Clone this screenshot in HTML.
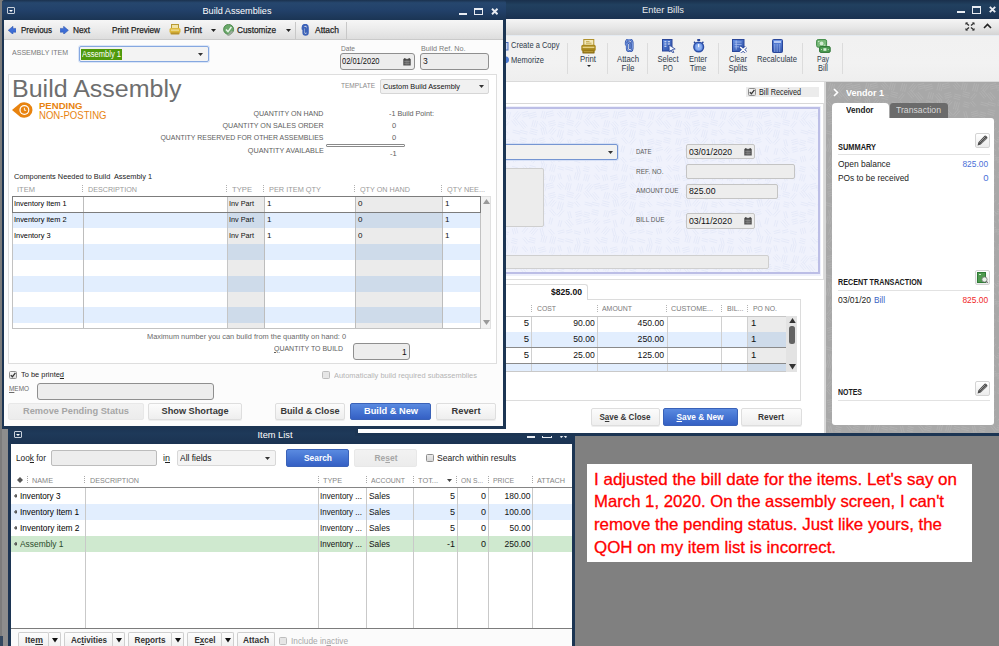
<!DOCTYPE html>
<html><head><meta charset="utf-8"><title>QuickBooks</title>
<style>
html,body{margin:0;padding:0}
html{width:999px;height:646px;overflow:hidden}
body{width:999px;height:646px;overflow:hidden;position:relative;background:#808080;font-family:"Liberation Sans",sans-serif}
body>div,body>svg,body>span{position:absolute;box-sizing:border-box}
.t{position:absolute;display:block}
u{text-decoration:underline;text-underline-offset:1px}
</style></head>
<body>
<div style="left:0px;top:429px;width:8px;height:217px;background:#8d8d8d;"></div>
<div style="left:0px;top:0px;width:1.6px;height:646px;background:#7c7c7c;"></div>
<div style="left:8px;top:428px;width:567px;height:218px;background:#1c3553;"></div>
<div style="left:8px;top:428px;width:567px;height:16px;background:linear-gradient(#1c3554 0%,#1e3959 35%,#1b3352 100%);"></div>
<div style="left:11px;top:444px;width:561px;height:202px;background:#fff;"></div>
<span class="t" style="top:430.26px;font-size:9.5px;line-height:9.5px;color:#fff;white-space:pre;left:275px;transform-origin:0 0;transform:translateX(-50%) scaleX(0.9748);transform-origin:50% 0;">Item List</span>
<div style="left:14px;top:431px;width:8px;height:7px;border:1px solid #c8d0da;border-radius:1px;"></div>
<svg style="left:16px;top:433.5px" width="4" height="2" viewBox="0 0 4 2"><path d="M0 0H4L2 2Z" fill="#fff"/></svg>
<div style="left:527px;top:436px;width:8.3px;height:2.3px;background:#e8ecf2;"></div>
<div style="left:542px;top:431px;width:10px;height:7.3px;border:1.2px solid #e8ecf2;border-top-width:2px;"></div>
<svg style="left:559.6px;top:431.2px" width="7" height="7" viewBox="0 0 7 7"><path d="M0.6 0.6L6.4 6.4M6.4 0.6L0.6 6.4" stroke="#e8ecf2" stroke-width="1.9"/></svg>
<span class="t" style="top:453.83px;font-size:9px;line-height:9px;color:#222;white-space:pre;left:16px;transform-origin:0 0;transform:scaleX(0.9217);">Loo<u>k</u> for</span>
<div style="left:51px;top:450px;width:106px;height:15.6px;background:#ededed;border:1px solid #bcbcbc;border-radius:2px;"></div>
<span class="t" style="top:453.83px;font-size:9px;line-height:9px;color:#222;white-space:pre;left:163px;transform-origin:0 0;transform:scaleX(0.9978);">i<u>n</u></span>
<div style="left:177px;top:450px;width:99px;height:16px;background:#f4f4f4;border:1px solid #d8d8d8;border-radius:2px;"></div>
<span class="t" style="top:453.63px;font-size:9px;line-height:9px;color:#111;white-space:pre;left:179.5px;transform-origin:0 0;transform:scaleX(0.9399);">All fields</span>
<svg style="left:265px;top:456.5px" width="5" height="3" viewBox="0 0 5 3"><path d="M0 0H5L2.5 3Z" fill="#333"/></svg>
<div style="left:286px;top:449px;width:63px;height:18px;background:linear-gradient(#5a8ae0 0%,#4574d2 50%,#3560c4 100%);border:1px solid #3a62b8;border-radius:2px;"></div>
<span class="t" style="top:453.36px;font-size:9.5px;line-height:9.5px;color:#fff;white-space:pre;font-weight:bold;left:317.5px;transform-origin:0 0;transform:translateX(-50%) scaleX(0.8836);transform-origin:50% 0;">Search</span>
<div style="left:354px;top:449px;width:63px;height:18px;background:linear-gradient(#f2f2f2,#ececec);border:1px solid #e8e8e8;border-radius:2px;"></div>
<span class="t" style="top:453.36px;font-size:9.5px;line-height:9.5px;color:#a6a6a6;white-space:pre;font-weight:bold;left:385.5px;transform-origin:0 0;transform:translateX(-50%) scaleX(0.8878);transform-origin:50% 0;">Re<u>s</u>et</span>
<div style="left:425.8px;top:453.8px;width:8px;height:8px;background:linear-gradient(#ebebeb,#d6d6d6);border:1px solid #8e8e8e;border-radius:1.5px;"></div>
<span class="t" style="top:453.63px;font-size:9px;line-height:9px;color:#222;white-space:pre;left:437px;transform-origin:0 0;transform:scaleX(0.9513);">Search within results</span>
<svg style="left:17px;top:476.5px" width="6" height="6" viewBox="0 0 6 6"><path d="M3 0L6 3L3 6L0 3Z" fill="#555"/></svg>
<div style="left:27px;top:476px;width:1px;height:1px;background:#a8a8a8;"></div>
<div style="left:27px;top:478px;width:1px;height:1px;background:#a8a8a8;"></div>
<div style="left:27px;top:480px;width:1px;height:1px;background:#a8a8a8;"></div>
<div style="left:27px;top:482px;width:1px;height:1px;background:#a8a8a8;"></div>
<div style="left:84px;top:476px;width:1px;height:1px;background:#a8a8a8;"></div>
<div style="left:84px;top:478px;width:1px;height:1px;background:#a8a8a8;"></div>
<div style="left:84px;top:480px;width:1px;height:1px;background:#a8a8a8;"></div>
<div style="left:84px;top:482px;width:1px;height:1px;background:#a8a8a8;"></div>
<div style="left:318px;top:476px;width:1px;height:1px;background:#a8a8a8;"></div>
<div style="left:318px;top:478px;width:1px;height:1px;background:#a8a8a8;"></div>
<div style="left:318px;top:480px;width:1px;height:1px;background:#a8a8a8;"></div>
<div style="left:318px;top:482px;width:1px;height:1px;background:#a8a8a8;"></div>
<div style="left:366px;top:476px;width:1px;height:1px;background:#a8a8a8;"></div>
<div style="left:366px;top:478px;width:1px;height:1px;background:#a8a8a8;"></div>
<div style="left:366px;top:480px;width:1px;height:1px;background:#a8a8a8;"></div>
<div style="left:366px;top:482px;width:1px;height:1px;background:#a8a8a8;"></div>
<div style="left:413px;top:476px;width:1px;height:1px;background:#a8a8a8;"></div>
<div style="left:413px;top:478px;width:1px;height:1px;background:#a8a8a8;"></div>
<div style="left:413px;top:480px;width:1px;height:1px;background:#a8a8a8;"></div>
<div style="left:413px;top:482px;width:1px;height:1px;background:#a8a8a8;"></div>
<div style="left:456px;top:476px;width:1px;height:1px;background:#a8a8a8;"></div>
<div style="left:456px;top:478px;width:1px;height:1px;background:#a8a8a8;"></div>
<div style="left:456px;top:480px;width:1px;height:1px;background:#a8a8a8;"></div>
<div style="left:456px;top:482px;width:1px;height:1px;background:#a8a8a8;"></div>
<div style="left:488px;top:476px;width:1px;height:1px;background:#a8a8a8;"></div>
<div style="left:488px;top:478px;width:1px;height:1px;background:#a8a8a8;"></div>
<div style="left:488px;top:480px;width:1px;height:1px;background:#a8a8a8;"></div>
<div style="left:488px;top:482px;width:1px;height:1px;background:#a8a8a8;"></div>
<div style="left:532px;top:476px;width:1px;height:1px;background:#a8a8a8;"></div>
<div style="left:532px;top:478px;width:1px;height:1px;background:#a8a8a8;"></div>
<div style="left:532px;top:480px;width:1px;height:1px;background:#a8a8a8;"></div>
<div style="left:532px;top:482px;width:1px;height:1px;background:#a8a8a8;"></div>
<span class="t" style="top:476.52px;font-size:7.5px;line-height:7.5px;color:#858585;white-space:pre;left:32px;transform-origin:0 0;transform:scaleX(0.9690);">NAME</span>
<span class="t" style="top:476.52px;font-size:7.5px;line-height:7.5px;color:#858585;white-space:pre;left:90px;transform-origin:0 0;transform:scaleX(0.9558);">DESCRIPTION</span>
<span class="t" style="top:476.52px;font-size:7.5px;line-height:7.5px;color:#858585;white-space:pre;left:323px;transform-origin:0 0;transform:scaleX(0.9697);">TYPE</span>
<span class="t" style="top:476.52px;font-size:7.5px;line-height:7.5px;color:#858585;white-space:pre;left:371px;transform-origin:0 0;transform:scaleX(0.9166);">ACCOUNT</span>
<span class="t" style="top:476.52px;font-size:7.5px;line-height:7.5px;color:#858585;white-space:pre;left:418px;transform-origin:0 0;transform:scaleX(0.9861);">TOT...</span>
<span class="t" style="top:476.52px;font-size:7.5px;line-height:7.5px;color:#858585;white-space:pre;left:461px;transform-origin:0 0;transform:scaleX(0.8945);">ON S...</span>
<span class="t" style="top:476.52px;font-size:7.5px;line-height:7.5px;color:#858585;white-space:pre;left:493px;transform-origin:0 0;transform:scaleX(0.9162);">PRICE</span>
<span class="t" style="top:476.52px;font-size:7.5px;line-height:7.5px;color:#858585;white-space:pre;left:537px;transform-origin:0 0;transform:scaleX(0.9692);">ATTACH</span>
<svg style="left:447px;top:478.5px" width="5" height="3" viewBox="0 0 5 3"><path d="M0 0H5L2.5 3Z" fill="#444"/></svg>
<div style="left:11px;top:487px;width:561px;height:1px;background:#858585;"></div>
<div style="left:11px;top:504px;width:561px;height:16px;background:#e2eefe;"></div>
<div style="left:11px;top:536px;width:561px;height:16px;background:#cfe9cf;"></div>
<div style="left:85px;top:488px;width:1px;height:140px;background:#c9c9c9;"></div>
<div style="left:318px;top:488px;width:1px;height:140px;background:#c9c9c9;"></div>
<div style="left:366px;top:488px;width:1px;height:140px;background:#c9c9c9;"></div>
<div style="left:413px;top:488px;width:1px;height:140px;background:#c9c9c9;"></div>
<div style="left:457px;top:488px;width:1px;height:140px;background:#c9c9c9;"></div>
<div style="left:488px;top:488px;width:1px;height:140px;background:#c9c9c9;"></div>
<div style="left:532px;top:488px;width:1px;height:140px;background:#c9c9c9;"></div>
<svg style="left:13.6px;top:494.2px" width="3.8" height="3.8" viewBox="0 0 3.8 3.8"><path d="M1.9 0L3.8 1.9L1.9 3.8L0 1.9Z" fill="#333"/><circle cx="1.9" cy="1.9" r="0.6" fill="#bbb"/></svg>
<span class="t" style="top:492.03px;font-size:9px;line-height:9px;color:#000;white-space:pre;left:20px;transform-origin:0 0;transform:scaleX(0.9095);">Inventory 3</span>
<span class="t" style="top:492.03px;font-size:9px;line-height:9px;color:#111;white-space:pre;left:320px;transform-origin:0 0;transform:scaleX(0.8930);">Inventory ...</span>
<span class="t" style="top:492.03px;font-size:9px;line-height:9px;color:#111;white-space:pre;left:369px;transform-origin:0 0;transform:scaleX(0.9327);">Sales</span>
<span class="t" style="top:492.03px;font-size:9px;line-height:9px;color:#111;white-space:pre;right:544px;transform-origin:100% 0;">5</span>
<span class="t" style="top:492.03px;font-size:9px;line-height:9px;color:#111;white-space:pre;right:513px;transform-origin:100% 0;">0</span>
<span class="t" style="top:492.03px;font-size:9px;line-height:9px;color:#111;white-space:pre;right:468.5px;transform-origin:100% 0;transform:scaleX(0.9444);">180.00</span>
<svg style="left:13.6px;top:510.2px" width="3.8" height="3.8" viewBox="0 0 3.8 3.8"><path d="M1.9 0L3.8 1.9L1.9 3.8L0 1.9Z" fill="#333"/><circle cx="1.9" cy="1.9" r="0.6" fill="#bbb"/></svg>
<span class="t" style="top:508.03px;font-size:9px;line-height:9px;color:#000;white-space:pre;left:20px;transform-origin:0 0;transform:scaleX(0.9143);">Inventory Item 1</span>
<span class="t" style="top:508.03px;font-size:9px;line-height:9px;color:#111;white-space:pre;left:320px;transform-origin:0 0;transform:scaleX(0.8930);">Inventory ...</span>
<span class="t" style="top:508.03px;font-size:9px;line-height:9px;color:#111;white-space:pre;left:369px;transform-origin:0 0;transform:scaleX(0.9327);">Sales</span>
<span class="t" style="top:508.03px;font-size:9px;line-height:9px;color:#111;white-space:pre;right:544px;transform-origin:100% 0;">5</span>
<span class="t" style="top:508.03px;font-size:9px;line-height:9px;color:#111;white-space:pre;right:513px;transform-origin:100% 0;">0</span>
<span class="t" style="top:508.03px;font-size:9px;line-height:9px;color:#111;white-space:pre;right:468.5px;transform-origin:100% 0;transform:scaleX(0.9444);">100.00</span>
<svg style="left:13.6px;top:526.2px" width="3.8" height="3.8" viewBox="0 0 3.8 3.8"><path d="M1.9 0L3.8 1.9L1.9 3.8L0 1.9Z" fill="#333"/><circle cx="1.9" cy="1.9" r="0.6" fill="#bbb"/></svg>
<span class="t" style="top:524.03px;font-size:9px;line-height:9px;color:#000;white-space:pre;left:20px;transform-origin:0 0;transform:scaleX(0.9292);">Inventory item 2</span>
<span class="t" style="top:524.03px;font-size:9px;line-height:9px;color:#111;white-space:pre;left:320px;transform-origin:0 0;transform:scaleX(0.8930);">Inventory ...</span>
<span class="t" style="top:524.03px;font-size:9px;line-height:9px;color:#111;white-space:pre;left:369px;transform-origin:0 0;transform:scaleX(0.9327);">Sales</span>
<span class="t" style="top:524.03px;font-size:9px;line-height:9px;color:#111;white-space:pre;right:544px;transform-origin:100% 0;">5</span>
<span class="t" style="top:524.03px;font-size:9px;line-height:9px;color:#111;white-space:pre;right:513px;transform-origin:100% 0;">0</span>
<span class="t" style="top:524.03px;font-size:9px;line-height:9px;color:#111;white-space:pre;right:468.5px;transform-origin:100% 0;transform:scaleX(0.9320);">50.00</span>
<svg style="left:13.6px;top:542.2px" width="3.8" height="3.8" viewBox="0 0 3.8 3.8"><path d="M1.9 0L3.8 1.9L1.9 3.8L0 1.9Z" fill="#333"/><circle cx="1.9" cy="1.9" r="0.6" fill="#bbb"/></svg>
<span class="t" style="top:540.03px;font-size:9px;line-height:9px;color:#2b4b2b;white-space:pre;left:20px;transform-origin:0 0;transform:scaleX(0.9349);">Assembly 1</span>
<span class="t" style="top:540.03px;font-size:9px;line-height:9px;color:#111;white-space:pre;left:320px;transform-origin:0 0;transform:scaleX(0.8930);">Inventory ...</span>
<span class="t" style="top:540.03px;font-size:9px;line-height:9px;color:#111;white-space:pre;left:369px;transform-origin:0 0;transform:scaleX(0.9327);">Sales</span>
<span class="t" style="top:540.03px;font-size:9px;line-height:9px;color:#111;white-space:pre;right:544px;transform-origin:100% 0;">-1</span>
<span class="t" style="top:540.03px;font-size:9px;line-height:9px;color:#111;white-space:pre;right:513px;transform-origin:100% 0;">0</span>
<span class="t" style="top:540.03px;font-size:9px;line-height:9px;color:#111;white-space:pre;right:468.5px;transform-origin:100% 0;transform:scaleX(0.9444);">250.00</span>
<div style="left:11px;top:627.6px;width:561px;height:1.2px;background:#7c7c7c;"></div>
<div style="left:11px;top:629px;width:561px;height:17px;background:#fbfbfb;"></div>
<div style="left:18px;top:632px;width:31px;height:14px;background:linear-gradient(#fdfdfd,#f0f0f0);border:1px solid #cfcfcf;border-bottom:none;border-radius:2px 2px 0 0;"></div>
<span class="t" style="top:636.03px;font-size:9px;line-height:9px;color:#333;white-space:pre;font-weight:bold;left:33.5px;transform-origin:0 0;transform:translateX(-50%) scaleX(0.9713);transform-origin:50% 0;">Ite<u>m</u></span>
<div style="left:49px;top:632px;width:12px;height:14px;background:linear-gradient(#fdfdfd,#f0f0f0);border:1px solid #cfcfcf;border-left:none;border-bottom:none;border-radius:0 2px 0 0;"></div>
<svg style="left:51.6px;top:638.2px" width="6" height="4.6" viewBox="0 0 6 4.6"><path d="M0 0H6L3 4.6Z" fill="#111"/></svg>
<div style="left:64px;top:632px;width:49px;height:14px;background:linear-gradient(#fdfdfd,#f0f0f0);border:1px solid #cfcfcf;border-bottom:none;border-radius:2px 2px 0 0;"></div>
<span class="t" style="top:636.03px;font-size:9px;line-height:9px;color:#333;white-space:pre;font-weight:bold;left:88.5px;transform-origin:0 0;transform:translateX(-50%) scaleX(0.8993);transform-origin:50% 0;">Ac<u>t</u>ivities</span>
<div style="left:113px;top:632px;width:12px;height:14px;background:linear-gradient(#fdfdfd,#f0f0f0);border:1px solid #cfcfcf;border-left:none;border-bottom:none;border-radius:0 2px 0 0;"></div>
<svg style="left:115.6px;top:638.2px" width="6" height="4.6" viewBox="0 0 6 4.6"><path d="M0 0H6L3 4.6Z" fill="#111"/></svg>
<div style="left:128px;top:632px;width:44px;height:14px;background:linear-gradient(#fdfdfd,#f0f0f0);border:1px solid #cfcfcf;border-bottom:none;border-radius:2px 2px 0 0;"></div>
<span class="t" style="top:636.03px;font-size:9px;line-height:9px;color:#333;white-space:pre;font-weight:bold;left:150.0px;transform-origin:0 0;transform:translateX(-50%) scaleX(0.9109);transform-origin:50% 0;">Re<u>p</u>orts</span>
<div style="left:172px;top:632px;width:12px;height:14px;background:linear-gradient(#fdfdfd,#f0f0f0);border:1px solid #cfcfcf;border-left:none;border-bottom:none;border-radius:0 2px 0 0;"></div>
<svg style="left:174.6px;top:638.2px" width="6" height="4.6" viewBox="0 0 6 4.6"><path d="M0 0H6L3 4.6Z" fill="#111"/></svg>
<div style="left:187px;top:632px;width:35px;height:14px;background:linear-gradient(#fdfdfd,#f0f0f0);border:1px solid #cfcfcf;border-bottom:none;border-radius:2px 2px 0 0;"></div>
<span class="t" style="top:636.03px;font-size:9px;line-height:9px;color:#333;white-space:pre;font-weight:bold;left:204.5px;transform-origin:0 0;transform:translateX(-50%) scaleX(0.8918);transform-origin:50% 0;">E<u>x</u>cel</span>
<div style="left:222px;top:632px;width:12px;height:14px;background:linear-gradient(#fdfdfd,#f0f0f0);border:1px solid #cfcfcf;border-left:none;border-bottom:none;border-radius:0 2px 0 0;"></div>
<svg style="left:224.6px;top:638.2px" width="6" height="4.6" viewBox="0 0 6 4.6"><path d="M0 0H6L3 4.6Z" fill="#111"/></svg>
<div style="left:237px;top:632px;width:38px;height:14px;background:linear-gradient(#fdfdfd,#f0f0f0);border:1px solid #cfcfcf;border-bottom:none;border-radius:2px 2px 0 0;"></div>
<span class="t" style="top:636.03px;font-size:9px;line-height:9px;color:#333;white-space:pre;font-weight:bold;left:256.0px;transform-origin:0 0;transform:translateX(-50%) scaleX(0.9281);transform-origin:50% 0;">Attach</span>
<div style="left:279.3px;top:637px;width:8px;height:8px;background:#e6e6e6;border:1px solid #bdbdbd;border-radius:1.5px;"></div>
<span class="t" style="top:637.03px;font-size:9px;line-height:9px;color:#a8a8a8;white-space:pre;left:291px;transform-origin:0 0;transform:scaleX(0.9184);">Include in<u>a</u>ctive</span>
<div style="left:0px;top:636px;width:3px;height:10px;background:#33475f;"></div>
<div style="left:355px;top:0px;width:644px;height:435.7px;background:#1c3553;"></div>
<div style="left:355px;top:0px;width:644px;height:19px;background:linear-gradient(#1a304c 0%,#21405f 25%,#1f3b5b 60%,#1a3150 100%);"></div>
<span class="t" style="top:4.76px;font-size:9.5px;line-height:9.5px;color:#e6e8ec;white-space:pre;left:663px;transform-origin:0 0;transform:translateX(-50%) scaleX(0.9821);transform-origin:50% 0;">Enter Bills</span>
<div style="left:957.4px;top:11px;width:7.2px;height:2px;background:#e8ecf2;"></div>
<div style="left:971.8px;top:6.4px;width:9.6px;height:7.2px;border:1px solid #e8ecf2;border-top-width:2px;"></div>
<svg style="left:989px;top:6.3px" width="7" height="7" viewBox="0 0 7 7"><path d="M0.8 0.8L6.2 6.2M6.2 0.8L0.8 6.2" stroke="#e8ecf2" stroke-width="1.9"/></svg>
<div style="left:358px;top:19px;width:641px;height:16px;background:linear-gradient(#f5f5f5,#e6e6e6 55%,#d4d4d4);"></div>
<svg style="left:965px;top:22px" width="10" height="9" viewBox="0 0 10 9"><path d="M1 1L4 3.6M9 1L6 3.6M1 8L4 5.4M9 8L6 5.4" stroke="#333" stroke-width="1.3"/><path d="M0.5 0.5H3.2L0.5 3Z M9.5 0.5H6.8L9.5 3Z M0.5 8.5H3.2L0.5 6Z M9.5 8.5H6.8L9.5 6Z" fill="#333"/></svg>
<svg style="left:983px;top:23px" width="9" height="6" viewBox="0 0 9 6"><path d="M1 5L4.5 1.5L8 5" stroke="#222" stroke-width="1.6" fill="none"/></svg>
<div style="left:358px;top:35px;width:641px;height:47px;background:linear-gradient(#dfe8f2 0,#f1f1f1 1.5px,#f2f2f2 60%,#eeeeee 100%);"></div>
<div style="left:358px;top:81px;width:641px;height:1px;background:#dadada;"></div>
<span class="t" style="top:40.83px;font-size:9px;line-height:9px;color:#2f3a4a;white-space:pre;left:511px;transform-origin:0 0;transform:scaleX(0.8358);">Create a Copy</span>
<span class="t" style="top:56.13px;font-size:9px;line-height:9px;color:#2f3a4a;white-space:pre;left:511px;transform-origin:0 0;transform:scaleX(0.8351);">Memorize</span>
<svg style="left:506px;top:42px" width="3" height="9" viewBox="0 0 3 9"><rect x="-3" y="0.5" width="5" height="7.5" fill="#c8d6f2" stroke="#4a6fc0"/></svg>
<svg style="left:506px;top:56px" width="4" height="8" viewBox="0 0 4 8"><circle cx="-0.4" cy="3.8" r="3.4" fill="#4a78d0"/></svg>
<div style="left:567px;top:43px;width:1px;height:31px;background:#dcdcdc;"></div>
<div style="left:607px;top:43px;width:1px;height:31px;background:#dcdcdc;"></div>
<div style="left:647px;top:43px;width:1px;height:31px;background:#dcdcdc;"></div>
<div style="left:718px;top:43px;width:1px;height:31px;background:#dcdcdc;"></div>
<div style="left:802px;top:43px;width:1px;height:31px;background:#dcdcdc;"></div>
<div style="left:842px;top:43px;width:1px;height:31px;background:#dcdcdc;"></div>
<svg style="left:581px;top:39px" width="15" height="15" viewBox="0 0 15 15"><rect x="2.8" y="0.5" width="10" height="6" fill="#f3e8b8" stroke="#b0922e"/><path d="M5 2.6H8.5M5 4.2H10.5" stroke="#b89a38" stroke-width="0.8"/><rect x="0.3" y="5.8" width="14.4" height="6.4" rx="1.6" fill="#a8871c"/><rect x="1.6" y="7.6" width="11.8" height="1.5" fill="#e6d182"/><rect x="1.4" y="11.4" width="12.2" height="3.2" rx="1.2" fill="#8a6c12"/><rect x="2.6" y="12.2" width="9.8" height="1" fill="#c4a640"/></svg>
<span class="t" style="top:55.33px;font-size:9px;line-height:9px;color:#2f3a4a;white-space:pre;left:588px;transform-origin:0 0;transform:translateX(-50%) scaleX(0.8641);transform-origin:50% 0;">Print</span>
<svg style="left:586.5px;top:65.4px" width="4" height="2" viewBox="0 0 4 2"><path d="M0 0H4L2.0 2Z" fill="#222"/></svg>
<svg style="left:623.5px;top:39.3px" width="10.5" height="13" viewBox="0 0 10.5 13"><path d="M2 5.6V3.6A3.2 3.2 0 0 1 8.4 3.6V9.4A2.7 2.7 0 0 1 3 9.4V5A1.5 1.5 0 0 1 6 5V9" stroke="#2f52a8" stroke-width="2.3" fill="none" stroke-linecap="round"/><path d="M2 5.6V3.6A3.2 3.2 0 0 1 8.4 3.6V9.4A2.7 2.7 0 0 1 3 9.4V5A1.5 1.5 0 0 1 6 5V9" stroke="#86a6ea" stroke-width="0.9" fill="none" stroke-linecap="round"/></svg>
<span class="t" style="top:55.33px;font-size:9px;line-height:9px;color:#2f3a4a;white-space:pre;left:627.5px;transform-origin:0 0;transform:translateX(-50%) scaleX(0.8622);transform-origin:50% 0;">Attach</span>
<span class="t" style="top:64.33px;font-size:9px;line-height:9px;color:#2f3a4a;white-space:pre;left:627.5px;transform-origin:0 0;transform:translateX(-50%) scaleX(0.8956);transform-origin:50% 0;">File</span>
<svg style="left:661.5px;top:39px" width="14" height="14" viewBox="0 0 14 14"><defs><linearGradient id="gpo" x1="0" y1="0" x2="1" y2="1"><stop offset="0" stop-color="#5c88e0"/><stop offset="1" stop-color="#2c4ea4"/></linearGradient></defs><rect x="0.5" y="0.5" width="9.5" height="11.5" fill="url(#gpo)" stroke="#2a479a"/><path d="M2.4 2.8H4.4M2.4 5H4.4M2.4 7.2H4.4M5.8 2.8H8M5.8 5H8" stroke="#e8eefc" stroke-width="1.1"/><path d="M7 6L13.2 10L10.4 10.5L11.9 13.3L10.6 13.9L9.2 11.1L7.3 12.8Z" fill="#f4f7ff" stroke="#2a479a" stroke-width="0.8"/></svg>
<span class="t" style="top:55.33px;font-size:9px;line-height:9px;color:#2f3a4a;white-space:pre;left:667.5px;transform-origin:0 0;transform:translateX(-50%) scaleX(0.8395);transform-origin:50% 0;">Select</span>
<span class="t" style="top:64.33px;font-size:9px;line-height:9px;color:#2f3a4a;white-space:pre;left:667.5px;transform-origin:0 0;transform:translateX(-50%) scaleX(0.7683);transform-origin:50% 0;">PO</span>
<svg style="left:692px;top:39.3px" width="13.4" height="13.6" viewBox="0 0 14 15"><rect x="5.4" y="0" width="3.2" height="2.2" fill="#2a479a"/><path d="M1.8 3L3.4 4.6M12.2 3L10.6 4.6" stroke="#2a479a" stroke-width="1.5"/><circle cx="7" cy="8.8" r="5.3" fill="#6a94e6" stroke="#2d4fa6" stroke-width="1.7"/><circle cx="7" cy="8.8" r="3.2" fill="#8db0f0"/><path d="M7 5.4V9" stroke="#fff" stroke-width="1.2"/></svg>
<span class="t" style="top:55.33px;font-size:9px;line-height:9px;color:#2f3a4a;white-space:pre;left:698px;transform-origin:0 0;transform:translateX(-50%) scaleX(0.8366);transform-origin:50% 0;">Enter</span>
<span class="t" style="top:64.33px;font-size:9px;line-height:9px;color:#2f3a4a;white-space:pre;left:698px;transform-origin:0 0;transform:translateX(-50%) scaleX(0.8133);transform-origin:50% 0;">Time</span>
<svg style="left:732px;top:39.3px" width="15" height="14" viewBox="0 0 15 14"><defs><linearGradient id="gcs" x1="0" y1="0" x2="1" y2="1"><stop offset="0" stop-color="#6490e6"/><stop offset="1" stop-color="#2a4aa0"/></linearGradient></defs><rect x="0.5" y="0.5" width="11.5" height="12" fill="url(#gcs)" stroke="#2a479a"/><path d="M2.6 3H9.6M2.6 5.4H9.6M2.6 7.8H7" stroke="#a9c0f0" stroke-width="0.8"/><path d="M4.2 1.4V10.6" stroke="#a9c0f0" stroke-width="0.8"/><path d="M8.2 8L14 13.4M14 8L8.2 13.4" stroke="#2a479a" stroke-width="3"/><path d="M8.2 8L14 13.4M14 8L8.2 13.4" stroke="#fff" stroke-width="1.7"/></svg>
<span class="t" style="top:55.33px;font-size:9px;line-height:9px;color:#2f3a4a;white-space:pre;left:738px;transform-origin:0 0;transform:translateX(-50%) scaleX(0.8366);transform-origin:50% 0;">Clear</span>
<span class="t" style="top:64.33px;font-size:9px;line-height:9px;color:#2f3a4a;white-space:pre;left:738px;transform-origin:0 0;transform:translateX(-50%) scaleX(0.8630);transform-origin:50% 0;">Splits</span>
<svg style="left:771.8px;top:39.3px" width="11" height="14" viewBox="0 0 11 14"><defs><linearGradient id="gca" x1="0" y1="0" x2="0" y2="1"><stop offset="0" stop-color="#5f8ae2"/><stop offset="1" stop-color="#2d4fa8"/></linearGradient></defs><rect x="0.5" y="0.5" width="10" height="13" rx="1" fill="url(#gca)" stroke="#2a479a"/><rect x="2" y="1.8" width="7" height="2.2" fill="#b4c8f4"/><path d="M2 6H9M2 8H9M2 10H9M2 12H9" stroke="#a4bcf0" stroke-width="1" stroke-dasharray="1.5 0.9"/></svg>
<span class="t" style="top:55.33px;font-size:9px;line-height:9px;color:#2f3a4a;white-space:pre;left:776.5px;transform-origin:0 0;transform:translateX(-50%) scaleX(0.8505);transform-origin:50% 0;">Recalculate</span>
<svg style="left:816px;top:39.3px" width="15" height="14" viewBox="0 0 15 14"><rect x="0.6" y="0.6" width="10" height="7.6" rx="1.6" fill="#78b878" stroke="#3f8a46"/><circle cx="5.6" cy="4.4" r="1.9" fill="#d4ecd4"/><path d="M2 2.6H3.4M7.8 6.2H9.2" stroke="#d4ecd4" stroke-width="0.9"/><rect x="3.6" y="7.6" width="10.6" height="5.8" rx="1.2" fill="#4e9c52" stroke="#2f7636"/><rect x="7.4" y="9.2" width="3" height="2.6" fill="#d8eed8"/><path d="M5 10.5H6M11.8 10.5H12.8" stroke="#bfe0bf" stroke-width="0.9"/></svg>
<span class="t" style="top:55.33px;font-size:9px;line-height:9px;color:#2f3a4a;white-space:pre;left:822.5px;transform-origin:0 0;transform:translateX(-50%) scaleX(0.7734);transform-origin:50% 0;">Pay</span>
<span class="t" style="top:64.33px;font-size:9px;line-height:9px;color:#2f3a4a;white-space:pre;left:822.5px;transform-origin:0 0;transform:translateX(-50%) scaleX(0.8322);transform-origin:50% 0;">Bill</span>
<div style="left:358px;top:82px;width:468px;height:350.6px;background:#fff;"></div>
<div style="left:824px;top:82px;width:2px;height:350.6px;background:#d9d9d9;"></div>
<div style="left:746px;top:87px;width:73px;height:10px;background:#ececec;"></div>
<div style="left:747.5px;top:88px;width:8px;height:8px;background:linear-gradient(#f6f6f6,#dedede);border:1px solid #8e8e8e;border-radius:1.5px;"></div>
<svg style="left:748.5px;top:89px" width="6" height="6" viewBox="0 0 6 6"><path d="M0.8 3.1L2.4 4.8L5.4 0.9" stroke="#333" stroke-width="1.3" fill="none"/></svg>
<span class="t" style="top:88.39px;font-size:8.5px;line-height:8.5px;color:#222;white-space:pre;left:759px;transform-origin:0 0;transform:scaleX(0.8547);">Bill Received</span>
<div style="left:358px;top:103px;width:466px;height:1.2px;background:#d8d8d8;"></div>
<div style="left:823px;top:103px;width:1px;height:177px;background:#dedede;"></div>
<div style="left:358px;top:279px;width:466px;height:1px;background:#dedede;"></div>
<div style="left:354px;top:105.5px;width:467px;height:170px;background:#eef0fb;"></div>
<div style="left:354px;top:107.4px;width:466px;height:166.8px;background:#f0f2fc;border:2px solid #bcbee6;"></div>
<svg style="left:358px;top:109.5px" width="460" height="162.5"><defs><pattern id="p1" width="72" height="72" patternUnits="userSpaceOnUse"><path d="M8.6 2.3L6.6 9.9M6.6 1.8L4.6 9.4M4.6 1.2L2.5 8.8M6.7 12.4L2.1 17.8M5.1 11.0L0.5 16.5M2.1 18.9L6.1 23.6M0.5 20.2L4.5 25.0M8.8 32.9L2.1 34.7M8.3 30.9L1.5 32.7M7.7 28.9L1.0 30.7M8.3 40.7L2.5 42.3M7.8 38.7L1.9 40.3M7.2 36.7L1.4 38.2M-0.2 48.7L7.0 50.6M-0.8 50.7L6.4 52.6M4.4 55.8L6.3 62.8M2.4 56.3L4.2 63.3M6.0 63.1L4.1 70.5M4.0 62.6L2.0 69.9M2.0 62.1L0.0 69.4M19.1 3.9L14.1 9.8M17.5 2.6L12.5 8.5M15.9 1.2L10.9 7.1M12.8 7.9L17.5 13.6M11.2 9.3L15.9 14.9M9.6 10.6L14.3 16.3M10.8 20.1L18.8 22.2M10.3 22.1L18.3 24.2M10.2 30.0L16.1 31.5M9.7 32.0L15.6 33.6M9.1 34.0L15.1 35.6M17.1 39.3L9.8 41.2M16.5 37.2L9.3 39.2M14.3 45.5L15.8 51.3M12.2 46.0L13.8 51.8M10.2 46.6L11.8 52.4M10.0 56.3L15.9 57.9M9.5 58.3L15.3 59.9M8.9 60.4L14.8 61.9M15.5 64.8L13.6 71.6M13.4 64.3L11.6 71.1M11.4 63.7L9.6 70.6M27.2 5.4L20.5 7.2M26.7 3.4L20.0 5.2M26.1 1.3L19.4 3.1M19.9 10.0L25.3 16.4M18.3 11.4L23.7 17.8M16.7 12.7L22.1 19.1M18.0 20.1L25.8 22.2M17.5 22.2L25.2 24.2M18.3 27.5L25.1 29.3M17.7 29.5L24.5 31.4M17.2 31.6L24.0 33.4M25.6 38.9L21.6 43.6M24.0 37.5L20.0 42.3M22.4 36.2L18.4 40.9M25.9 46.1L21.5 51.4M24.3 44.7L19.9 50.0M22.3 54.9L27.1 60.6M20.7 56.3L25.4 62.0M21.6 63.7L25.8 68.8M20.0 65.1L24.2 70.1M35.1 6.2L27.1 8.3M34.6 4.1L26.6 6.3M34.0 2.1L26.0 4.3M35.6 11.0L33.8 17.7M33.6 10.4L31.7 17.2M31.5 9.9L29.7 16.7M28.3 18.7L35.8 20.7M27.8 20.8L35.3 22.8M27.2 22.8L34.7 24.8M35.4 29.1L33.6 35.6M33.3 28.6L31.6 35.0M31.3 28.0L29.6 34.5M36.7 39.5L29.7 41.3M36.1 37.4L29.2 39.3M36.1 47.0L30.8 53.3M34.5 45.7L29.2 52.0M32.9 44.3L27.6 50.6M27.6 55.4L33.9 57.1M27.0 57.4L33.4 59.1M26.5 59.4L32.9 61.1M32.3 64.1L34.0 70.2M30.3 64.7L31.9 70.8M28.3 65.2L29.9 71.3M45.0 1.8L43.0 9.2M42.9 1.3L41.0 8.7M40.9 0.7L38.9 8.1M40.1 10.7L44.7 16.2M38.5 12.0L43.1 17.5M36.9 13.4L41.5 18.9M42.9 16.9L44.9 24.2M40.9 17.4L42.9 24.7M38.9 18.0L40.8 25.2M43.5 31.6L37.5 33.2M42.9 29.6L37.0 31.2M42.4 27.6L36.4 29.2M41.2 37.7L43.2 45.2M39.2 38.2L41.2 45.7M40.0 45.8L42.1 53.7M38.0 46.4L40.1 54.3M44.8 54.2L42.9 61.1M42.8 53.6L40.9 60.6M40.7 53.1L38.9 60.0M44.3 68.8L37.1 70.7M43.8 66.8L36.5 68.7M43.2 64.8L36.0 66.7M52.3 4.9L45.5 6.7M51.7 2.9L45.0 4.7M51.2 0.8L44.4 2.6M54.1 14.5L47.2 16.3M53.5 12.5L46.6 14.3M53.0 10.4L46.1 12.3M54.3 19.6L49.5 25.3M52.6 18.2L47.9 23.9M51.0 16.9L46.2 22.6M49.1 26.6L54.2 32.7M47.5 28.0L52.6 34.0M50.7 36.1L48.9 42.6M48.6 35.5L46.9 42.0M48.2 47.0L52.6 52.2M46.6 48.3L50.9 53.5M53.7 54.9L51.7 62.2M51.7 54.3L49.7 61.7M49.6 53.8L47.7 61.1M53.3 65.7L51.6 71.9M51.2 65.1L49.6 71.4M49.2 64.6L47.5 70.9M58.3 0.2L62.4 5.0M56.7 1.5L60.8 6.4M55.1 2.9L59.2 7.7M56.5 12.0L62.9 13.7M55.9 14.0L62.4 15.7M55.4 16.0L61.8 17.7M61.5 20.5L59.4 28.2M59.4 19.9L57.4 27.6M57.4 19.4L55.4 27.1M61.9 28.6L56.7 34.7M60.3 27.2L55.1 33.3M59.8 38.5L58.1 45.0M57.8 38.0L56.1 44.4M62.7 49.9L56.1 51.6M62.1 47.8L55.6 49.6M56.1 56.4L62.3 58.0M55.5 58.4L61.8 60.1M57.9 63.2L59.5 69.1M55.9 63.7L57.5 69.6M69.3 1.5L67.4 8.8M67.3 1.0L65.4 8.2M65.3 0.4L63.3 7.7M65.1 9.6L72.0 11.5M64.6 11.7L71.5 13.5M64.1 13.7L71.0 15.6M65.9 19.8L71.7 21.4M65.3 21.8L71.2 23.4M64.8 23.8L70.7 25.4M67.7 29.1L69.6 36.0M65.7 29.6L67.5 36.6M66.2 36.9L71.4 43.2M64.6 38.2L69.8 44.5M62.9 39.6L68.2 45.9M70.6 49.5L64.3 51.2M70.0 47.5L63.8 49.2M63.5 56.6L71.3 58.7M62.9 58.7L70.8 60.8M67.6 64.5L69.2 70.8M65.5 65.1L67.2 71.4" stroke="#e2e7f8" stroke-width="0.8" fill="none"/></pattern></defs><rect width="460" height="162.5" fill="url(#p1)"/></svg>
<div style="left:358px;top:144px;width:259.6px;height:16px;background:#f1f1f1;border:1px solid #7595d2;border-radius:2px;box-shadow:0 0 0 1px #d6e0f6;"></div>
<svg style="left:608px;top:150.5px" width="5" height="3" viewBox="0 0 5 3"><path d="M0 0H5L2.5 3Z" fill="#333"/></svg>
<div style="left:358px;top:168px;width:186px;height:59px;background:#ececec;border:1px solid #cfcfcf;border-radius:2px;"></div>
<span class="t" style="top:148.29px;font-size:7px;line-height:7px;color:#5a5a5a;white-space:pre;left:636.2px;transform-origin:0 0;transform:scaleX(0.8537);">DATE</span>
<div style="left:686px;top:144.4px;width:69px;height:15px;background:#ededed;border:1px solid #c4c4c4;border-radius:2px;"></div>
<span class="t" style="top:146.95px;font-size:9.6px;line-height:9.6px;color:#111;white-space:pre;left:688.7px;transform-origin:0 0;transform:scaleX(0.8955);">03/01/2020</span>
<svg style="left:743.6px;top:148px" width="8" height="7.5" viewBox="0 0 7 7"><rect x="0" y="0.8" width="7" height="6.2" fill="#555"/><rect x="1" y="0" width="1" height="1.6" fill="#333"/><rect x="5" y="0" width="1" height="1.6" fill="#333"/><path d="M1 3.3H6M1 5H6M2.7 2.2V6.4M4.4 2.2V6.4" stroke="#999" stroke-width="0.5"/></svg>
<span class="t" style="top:167.69px;font-size:7px;line-height:7px;color:#5a5a5a;white-space:pre;left:636.2px;transform-origin:0 0;transform:scaleX(0.9302);">REF. NO.</span>
<div style="left:686px;top:164px;width:108.6px;height:14.8px;background:#ededed;border:1px solid #c4c4c4;border-radius:2px;"></div>
<span class="t" style="top:186.69px;font-size:7px;line-height:7px;color:#5a5a5a;white-space:pre;left:636.2px;transform-origin:0 0;transform:scaleX(0.9055);">AMOUNT DUE</span>
<div style="left:686px;top:184px;width:91.6px;height:14.6px;background:#ededed;border:1px solid #c4c4c4;border-radius:2px;"></div>
<span class="t" style="top:186.25px;font-size:9.6px;line-height:9.6px;color:#111;white-space:pre;left:688.7px;transform-origin:0 0;transform:scaleX(0.9031);">825.00</span>
<span class="t" style="top:216.49px;font-size:7px;line-height:7px;color:#5a5a5a;white-space:pre;left:636.2px;transform-origin:0 0;transform:scaleX(0.9231);">BILL DUE</span>
<div style="left:686px;top:213.4px;width:69px;height:15.2px;background:#ededed;border:1px solid #c4c4c4;border-radius:2px;"></div>
<span class="t" style="top:216.35px;font-size:9.6px;line-height:9.6px;color:#111;white-space:pre;left:688.7px;transform-origin:0 0;transform:scaleX(0.9089);">03/11/2020</span>
<svg style="left:743.6px;top:217.4px" width="8" height="7.5" viewBox="0 0 7 7"><rect x="0" y="0.8" width="7" height="6.2" fill="#555"/><rect x="1" y="0" width="1" height="1.6" fill="#333"/><rect x="5" y="0" width="1" height="1.6" fill="#333"/><path d="M1 3.3H6M1 5H6M2.7 2.2V6.4M4.4 2.2V6.4" stroke="#999" stroke-width="0.5"/></svg>
<div style="left:358px;top:255px;width:411px;height:14px;background:#ececec;border:1px solid #cfcfcf;border-radius:2px;"></div>
<div style="left:356px;top:299px;width:445px;height:102px;background:#fff;border:1px solid #dcdcdc;"></div>
<div style="left:356px;top:283.5px;width:232px;height:16.5px;background:#fff;border:1px solid #dcdcdc;border-bottom:none;border-radius:3px 3px 0 0;"></div>
<span class="t" style="top:286.76px;font-size:9.5px;line-height:9.5px;color:#111;white-space:pre;font-weight:bold;left:551.2px;transform-origin:0 0;transform:scaleX(0.9026);">$825.00</span>
<div style="left:531px;top:304.5px;width:1px;height:1px;background:#b4b4b4;"></div>
<div style="left:531px;top:306.5px;width:1px;height:1px;background:#b4b4b4;"></div>
<div style="left:531px;top:308.5px;width:1px;height:1px;background:#b4b4b4;"></div>
<div style="left:531px;top:310.5px;width:1px;height:1px;background:#b4b4b4;"></div>
<div style="left:597px;top:304.5px;width:1px;height:1px;background:#b4b4b4;"></div>
<div style="left:597px;top:306.5px;width:1px;height:1px;background:#b4b4b4;"></div>
<div style="left:597px;top:308.5px;width:1px;height:1px;background:#b4b4b4;"></div>
<div style="left:597px;top:310.5px;width:1px;height:1px;background:#b4b4b4;"></div>
<div style="left:666px;top:304.5px;width:1px;height:1px;background:#b4b4b4;"></div>
<div style="left:666px;top:306.5px;width:1px;height:1px;background:#b4b4b4;"></div>
<div style="left:666px;top:308.5px;width:1px;height:1px;background:#b4b4b4;"></div>
<div style="left:666px;top:310.5px;width:1px;height:1px;background:#b4b4b4;"></div>
<div style="left:721px;top:304.5px;width:1px;height:1px;background:#b4b4b4;"></div>
<div style="left:721px;top:306.5px;width:1px;height:1px;background:#b4b4b4;"></div>
<div style="left:721px;top:308.5px;width:1px;height:1px;background:#b4b4b4;"></div>
<div style="left:721px;top:310.5px;width:1px;height:1px;background:#b4b4b4;"></div>
<div style="left:747px;top:304.5px;width:1px;height:1px;background:#b4b4b4;"></div>
<div style="left:747px;top:306.5px;width:1px;height:1px;background:#b4b4b4;"></div>
<div style="left:747px;top:308.5px;width:1px;height:1px;background:#b4b4b4;"></div>
<div style="left:747px;top:310.5px;width:1px;height:1px;background:#b4b4b4;"></div>
<span class="t" style="top:305.49px;font-size:7px;line-height:7px;color:#7a7a7a;white-space:pre;left:536.5px;transform-origin:0 0;transform:scaleX(0.9767);">COST</span>
<span class="t" style="top:305.49px;font-size:7px;line-height:7px;color:#7a7a7a;white-space:pre;left:602.3px;transform-origin:0 0;transform:scaleX(0.9887);">AMOUNT</span>
<span class="t" style="top:305.49px;font-size:7px;line-height:7px;color:#7a7a7a;white-space:pre;left:671.3px;transform-origin:0 0;transform:scaleX(1.0315);">CUSTOME...</span>
<span class="t" style="top:305.49px;font-size:7px;line-height:7px;color:#7a7a7a;white-space:pre;left:726.6px;transform-origin:0 0;transform:scaleX(1.0096);">BIL...</span>
<span class="t" style="top:305.49px;font-size:7px;line-height:7px;color:#7a7a7a;white-space:pre;left:752.8px;transform-origin:0 0;transform:scaleX(0.9790);">PO NO.</span>
<div style="left:358px;top:315.6px;width:428.4px;height:56.4px;background:#fff;border-top:1px solid #c6c6c6;border-bottom:1px solid #c9c9c9;"></div>
<div style="left:358px;top:332px;width:428px;height:16px;background:#e2eefe;"></div>
<div style="left:358px;top:364px;width:428px;height:7px;background:#e2eefe;"></div>
<div style="left:748px;top:316.6px;width:38.4px;height:54.4px;background:#ebebeb;"></div>
<div style="left:748px;top:332px;width:38.4px;height:16px;background:#cedbea;"></div>
<div style="left:748px;top:364px;width:38.4px;height:7px;background:#cedbea;"></div>
<div style="left:531px;top:316.6px;width:1px;height:54.4px;background:#d0d0d0;"></div>
<div style="left:597px;top:316.6px;width:1px;height:54.4px;background:#d0d0d0;"></div>
<div style="left:667px;top:316.6px;width:1px;height:54.4px;background:#d0d0d0;"></div>
<div style="left:721px;top:316.6px;width:1px;height:54.4px;background:#d0d0d0;"></div>
<div style="left:747px;top:316.6px;width:1px;height:54.4px;background:#d0d0d0;"></div>
<div style="left:355px;top:347.4px;width:431.8px;height:16.8px;border:1px solid #8a8a8a;"></div>
<span class="t" style="top:318.37px;font-size:9.5px;line-height:9.5px;color:#111;white-space:pre;right:470px;transform-origin:100% 0;">5</span>
<span class="t" style="top:318.37px;font-size:9.5px;line-height:9.5px;color:#111;white-space:pre;right:404.5px;transform-origin:100% 0;transform:scaleX(0.9041);">90.00</span>
<span class="t" style="top:318.37px;font-size:9.5px;line-height:9.5px;color:#111;white-space:pre;right:335px;transform-origin:100% 0;transform:scaleX(0.9118);">450.00</span>
<span class="t" style="top:318.37px;font-size:9.5px;line-height:9.5px;color:#111;white-space:pre;left:751px;transform-origin:0 0;">1</span>
<span class="t" style="top:334.37px;font-size:9.5px;line-height:9.5px;color:#111;white-space:pre;right:470px;transform-origin:100% 0;">5</span>
<span class="t" style="top:334.37px;font-size:9.5px;line-height:9.5px;color:#111;white-space:pre;right:404.5px;transform-origin:100% 0;transform:scaleX(0.9041);">50.00</span>
<span class="t" style="top:334.37px;font-size:9.5px;line-height:9.5px;color:#111;white-space:pre;right:335px;transform-origin:100% 0;transform:scaleX(0.9118);">250.00</span>
<span class="t" style="top:334.37px;font-size:9.5px;line-height:9.5px;color:#111;white-space:pre;left:751px;transform-origin:0 0;">1</span>
<span class="t" style="top:350.37px;font-size:9.5px;line-height:9.5px;color:#111;white-space:pre;right:470px;transform-origin:100% 0;">5</span>
<span class="t" style="top:350.37px;font-size:9.5px;line-height:9.5px;color:#111;white-space:pre;right:404.5px;transform-origin:100% 0;transform:scaleX(0.9041);">25.00</span>
<span class="t" style="top:350.37px;font-size:9.5px;line-height:9.5px;color:#111;white-space:pre;right:335px;transform-origin:100% 0;transform:scaleX(0.9118);">125.00</span>
<span class="t" style="top:350.37px;font-size:9.5px;line-height:9.5px;color:#111;white-space:pre;left:751px;transform-origin:0 0;">1</span>
<div style="left:786.4px;top:316px;width:10.4px;height:56px;background:#e3e3e3;"></div>
<svg style="left:788.5px;top:318px" width="7" height="5.4" viewBox="0 0 7 5.4"><path d="M0 5.4H7L3.5 0Z" fill="#333"/></svg>
<svg style="left:788.5px;top:364.4px" width="7" height="5.4" viewBox="0 0 7 5.4"><path d="M0 0H7L3.5 5.4Z" fill="#333"/></svg>
<div style="left:788.6px;top:326.4px;width:6.4px;height:17.6px;background:#636363;border-radius:2.5px;"></div>
<div style="left:591px;top:407.7px;width:68.6px;height:18px;background:linear-gradient(#fcfcfc,#eeeeee);border:1px solid #dedede;border-radius:2px;box-shadow:0 1px 0 #eeeeee;"></div>
<span class="t" style="top:412.06px;font-size:9.5px;line-height:9.5px;color:#383838;white-space:pre;font-weight:bold;left:625.3px;transform-origin:0 0;transform:translateX(-50%) scaleX(0.8469);transform-origin:50% 0;">S<u>a</u>ve &amp; Close</span>
<div style="left:662.6px;top:407.7px;width:75px;height:18px;background:linear-gradient(#5a8ae0 0%,#4574d2 50%,#3560c4 100%);border:1px solid #3a62b8;border-radius:2px;"></div>
<span class="t" style="top:412.06px;font-size:9.5px;line-height:9.5px;color:#fff;white-space:pre;font-weight:bold;left:700.1px;transform-origin:0 0;transform:translateX(-50%) scaleX(0.8724);transform-origin:50% 0;"><u>S</u>ave &amp; New</span>
<div style="left:741.3px;top:407.7px;width:60.3px;height:18px;background:linear-gradient(#fcfcfc,#eeeeee);border:1px solid #dedede;border-radius:2px;box-shadow:0 1px 0 #eeeeee;"></div>
<span class="t" style="top:412.06px;font-size:9.5px;line-height:9.5px;color:#383838;white-space:pre;font-weight:bold;left:771.45px;transform-origin:0 0;transform:translateX(-50%) scaleX(0.8790);transform-origin:50% 0;">Revert</span>
<div style="left:826px;top:82px;width:173px;height:350.6px;background:#a8a8a8;"></div>
<svg style="left:826px;top:82px" width="173" height="350.6"><defs><pattern id="p2" width="72" height="72" patternUnits="userSpaceOnUse"><path d="M8.6 2.3L6.6 9.9M6.6 1.8L4.6 9.4M4.6 1.2L2.5 8.8M6.7 12.4L2.1 17.8M5.1 11.0L0.5 16.5M2.1 18.9L6.1 23.6M0.5 20.2L4.5 25.0M8.8 32.9L2.1 34.7M8.3 30.9L1.5 32.7M7.7 28.9L1.0 30.7M8.3 40.7L2.5 42.3M7.8 38.7L1.9 40.3M7.2 36.7L1.4 38.2M-0.2 48.7L7.0 50.6M-0.8 50.7L6.4 52.6M4.4 55.8L6.3 62.8M2.4 56.3L4.2 63.3M6.0 63.1L4.1 70.5M4.0 62.6L2.0 69.9M2.0 62.1L0.0 69.4M19.1 3.9L14.1 9.8M17.5 2.6L12.5 8.5M15.9 1.2L10.9 7.1M12.8 7.9L17.5 13.6M11.2 9.3L15.9 14.9M9.6 10.6L14.3 16.3M10.8 20.1L18.8 22.2M10.3 22.1L18.3 24.2M10.2 30.0L16.1 31.5M9.7 32.0L15.6 33.6M9.1 34.0L15.1 35.6M17.1 39.3L9.8 41.2M16.5 37.2L9.3 39.2M14.3 45.5L15.8 51.3M12.2 46.0L13.8 51.8M10.2 46.6L11.8 52.4M10.0 56.3L15.9 57.9M9.5 58.3L15.3 59.9M8.9 60.4L14.8 61.9M15.5 64.8L13.6 71.6M13.4 64.3L11.6 71.1M11.4 63.7L9.6 70.6M27.2 5.4L20.5 7.2M26.7 3.4L20.0 5.2M26.1 1.3L19.4 3.1M19.9 10.0L25.3 16.4M18.3 11.4L23.7 17.8M16.7 12.7L22.1 19.1M18.0 20.1L25.8 22.2M17.5 22.2L25.2 24.2M18.3 27.5L25.1 29.3M17.7 29.5L24.5 31.4M17.2 31.6L24.0 33.4M25.6 38.9L21.6 43.6M24.0 37.5L20.0 42.3M22.4 36.2L18.4 40.9M25.9 46.1L21.5 51.4M24.3 44.7L19.9 50.0M22.3 54.9L27.1 60.6M20.7 56.3L25.4 62.0M21.6 63.7L25.8 68.8M20.0 65.1L24.2 70.1M35.1 6.2L27.1 8.3M34.6 4.1L26.6 6.3M34.0 2.1L26.0 4.3M35.6 11.0L33.8 17.7M33.6 10.4L31.7 17.2M31.5 9.9L29.7 16.7M28.3 18.7L35.8 20.7M27.8 20.8L35.3 22.8M27.2 22.8L34.7 24.8M35.4 29.1L33.6 35.6M33.3 28.6L31.6 35.0M31.3 28.0L29.6 34.5M36.7 39.5L29.7 41.3M36.1 37.4L29.2 39.3M36.1 47.0L30.8 53.3M34.5 45.7L29.2 52.0M32.9 44.3L27.6 50.6M27.6 55.4L33.9 57.1M27.0 57.4L33.4 59.1M26.5 59.4L32.9 61.1M32.3 64.1L34.0 70.2M30.3 64.7L31.9 70.8M28.3 65.2L29.9 71.3M45.0 1.8L43.0 9.2M42.9 1.3L41.0 8.7M40.9 0.7L38.9 8.1M40.1 10.7L44.7 16.2M38.5 12.0L43.1 17.5M36.9 13.4L41.5 18.9M42.9 16.9L44.9 24.2M40.9 17.4L42.9 24.7M38.9 18.0L40.8 25.2M43.5 31.6L37.5 33.2M42.9 29.6L37.0 31.2M42.4 27.6L36.4 29.2M41.2 37.7L43.2 45.2M39.2 38.2L41.2 45.7M40.0 45.8L42.1 53.7M38.0 46.4L40.1 54.3M44.8 54.2L42.9 61.1M42.8 53.6L40.9 60.6M40.7 53.1L38.9 60.0M44.3 68.8L37.1 70.7M43.8 66.8L36.5 68.7M43.2 64.8L36.0 66.7M52.3 4.9L45.5 6.7M51.7 2.9L45.0 4.7M51.2 0.8L44.4 2.6M54.1 14.5L47.2 16.3M53.5 12.5L46.6 14.3M53.0 10.4L46.1 12.3M54.3 19.6L49.5 25.3M52.6 18.2L47.9 23.9M51.0 16.9L46.2 22.6M49.1 26.6L54.2 32.7M47.5 28.0L52.6 34.0M50.7 36.1L48.9 42.6M48.6 35.5L46.9 42.0M48.2 47.0L52.6 52.2M46.6 48.3L50.9 53.5M53.7 54.9L51.7 62.2M51.7 54.3L49.7 61.7M49.6 53.8L47.7 61.1M53.3 65.7L51.6 71.9M51.2 65.1L49.6 71.4M49.2 64.6L47.5 70.9M58.3 0.2L62.4 5.0M56.7 1.5L60.8 6.4M55.1 2.9L59.2 7.7M56.5 12.0L62.9 13.7M55.9 14.0L62.4 15.7M55.4 16.0L61.8 17.7M61.5 20.5L59.4 28.2M59.4 19.9L57.4 27.6M57.4 19.4L55.4 27.1M61.9 28.6L56.7 34.7M60.3 27.2L55.1 33.3M59.8 38.5L58.1 45.0M57.8 38.0L56.1 44.4M62.7 49.9L56.1 51.6M62.1 47.8L55.6 49.6M56.1 56.4L62.3 58.0M55.5 58.4L61.8 60.1M57.9 63.2L59.5 69.1M55.9 63.7L57.5 69.6M69.3 1.5L67.4 8.8M67.3 1.0L65.4 8.2M65.3 0.4L63.3 7.7M65.1 9.6L72.0 11.5M64.6 11.7L71.5 13.5M64.1 13.7L71.0 15.6M65.9 19.8L71.7 21.4M65.3 21.8L71.2 23.4M64.8 23.8L70.7 25.4M67.7 29.1L69.6 36.0M65.7 29.6L67.5 36.6M66.2 36.9L71.4 43.2M64.6 38.2L69.8 44.5M62.9 39.6L68.2 45.9M70.6 49.5L64.3 51.2M70.0 47.5L63.8 49.2M63.5 56.6L71.3 58.7M62.9 58.7L70.8 60.8M67.6 64.5L69.2 70.8M65.5 65.1L67.2 71.4" stroke="#b2b2b2" stroke-width="0.8" fill="none"/></pattern></defs><rect width="173" height="350.6" fill="url(#p2)"/></svg>
<svg style="left:833px;top:87.5px" width="6" height="9" viewBox="0 0 6 9"><path d="M1 1L4.5 4.5L1 8" stroke="#fff" stroke-width="1.6" fill="none"/></svg>
<span class="t" style="top:87.77px;font-size:9.5px;line-height:9.5px;color:#fff;white-space:pre;font-weight:bold;left:845.5px;transform-origin:0 0;transform:scaleX(0.9470);">Vendor 1</span>
<div style="left:890px;top:103px;width:58px;height:16px;background:#6b6b6b;border-radius:3px 3px 0 0;"></div>
<span class="t" style="top:105.83px;font-size:9px;line-height:9px;color:#d8d8d8;white-space:pre;left:896px;transform-origin:0 0;transform:scaleX(0.9639);">Transaction</span>
<div style="left:831.5px;top:118px;width:162px;height:307px;background:#fff;border-radius:0 3px 3px 3px;"></div>
<div style="left:831.5px;top:102.5px;width:57.5px;height:17.5px;background:#fff;border-radius:4px 4px 0 0;"></div>
<span class="t" style="top:105.83px;font-size:9px;line-height:9px;color:#222;white-space:pre;font-weight:bold;left:846px;transform-origin:0 0;transform:scaleX(0.9012);">Vendor</span>
<span class="t" style="top:142.59px;font-size:8.5px;line-height:8.5px;color:#1a1a1a;white-space:pre;font-weight:bold;left:838px;transform-origin:0 0;transform:scaleX(0.8714);">SUMMARY</span>
<div style="left:975px;top:132.5px;width:15px;height:15px;background:linear-gradient(#fff,#ececec);border:1px solid #d4d4d4;border-radius:2px;"></div>
<svg style="left:977px;top:134.5px" width="11" height="11" viewBox="0 0 11 11"><path d="M0.6 10.4L1.4 7.2L7.6 0.8Q8.4 0.2 9.2 1L10 1.8Q10.8 2.6 10.2 3.4L3.8 9.6Z" fill="#4a4a4a"/><path d="M2.6 7.4L8.4 1.6M4 8.6L9.6 2.8" stroke="#b8b8b8" stroke-width="0.7"/></svg>
<div style="left:838px;top:154px;width:152px;height:1px;background:#e2e2e2;"></div>
<span class="t" style="top:158.96px;font-size:9.5px;line-height:9.5px;color:#222;white-space:pre;left:838px;transform-origin:0 0;transform:scaleX(0.8872);">Open balance</span>
<span class="t" style="top:158.96px;font-size:9.5px;line-height:9.5px;color:#4a6fd8;white-space:pre;right:10.5px;transform-origin:100% 0;transform:scaleX(0.8809);">825.00</span>
<span class="t" style="top:173.46px;font-size:9.5px;line-height:9.5px;color:#222;white-space:pre;left:838px;transform-origin:0 0;transform:scaleX(0.8787);">POs to be received</span>
<span class="t" style="top:173.46px;font-size:9.5px;line-height:9.5px;color:#4a6fd8;white-space:pre;right:10.5px;transform-origin:100% 0;">0</span>
<span class="t" style="top:277.89px;font-size:8.5px;line-height:8.5px;color:#1a1a1a;white-space:pre;font-weight:bold;left:838px;transform-origin:0 0;transform:scaleX(0.8470);">RECENT TRANSACTION</span>
<div style="left:975px;top:270px;width:15px;height:15px;background:linear-gradient(#fff,#ececec);border:1px solid #d4d4d4;border-radius:2px;"></div>
<svg style="left:977px;top:272px" width="11" height="11" viewBox="0 0 11 11"><rect x="0.5" y="0.5" width="8" height="10" fill="#4f9a4f" stroke="#2f7a36"/><path d="M2 2.5H4" stroke="#cfe8cf"/><circle cx="7.5" cy="7.5" r="2.6" fill="#e8f4e8" stroke="#777" stroke-width="0.8"/><path d="M9.2 9.4L10.6 10.8" stroke="#666" stroke-width="1.2"/></svg>
<div style="left:838px;top:290px;width:152px;height:1px;background:#e2e2e2;"></div>
<span class="t" style="top:294.87px;font-size:9.5px;line-height:9.5px;color:#222;white-space:pre;left:838px;transform-origin:0 0;transform:scaleX(0.8923);">03/01/20</span>
<span class="t" style="top:294.87px;font-size:9.5px;line-height:9.5px;color:#3a62c4;white-space:pre;left:873.5px;transform-origin:0 0;transform:scaleX(0.8681);">Bill</span>
<span class="t" style="top:294.87px;font-size:9.5px;line-height:9.5px;color:#f02828;white-space:pre;right:10.5px;transform-origin:100% 0;transform:scaleX(0.8809);">825.00</span>
<span class="t" style="top:388.39px;font-size:8.5px;line-height:8.5px;color:#1a1a1a;white-space:pre;font-weight:bold;left:838px;transform-origin:0 0;transform:scaleX(0.8196);">NOTES</span>
<div style="left:975px;top:380.6px;width:15px;height:15px;background:linear-gradient(#fff,#ececec);border:1px solid #d4d4d4;border-radius:2px;"></div>
<svg style="left:977px;top:382.6px" width="11" height="11" viewBox="0 0 11 11"><path d="M0.6 10.4L1.4 7.2L7.6 0.8Q8.4 0.2 9.2 1L10 1.8Q10.8 2.6 10.2 3.4L3.8 9.6Z" fill="#4a4a4a"/><path d="M2.6 7.4L8.4 1.6M4 8.6L9.6 2.8" stroke="#b8b8b8" stroke-width="0.7"/></svg>
<div style="left:838px;top:400px;width:152px;height:1px;background:#e2e2e2;"></div>
<div style="left:1.6px;top:0px;width:504.4px;height:429px;background:#1c3553;border-radius:3px 3px 0 0;"></div>
<div style="left:1.6px;top:0px;width:504.4px;height:20px;background:linear-gradient(#1b324e 0%,#26476e 14%,#22416a 50%,#1b3554 100%);border-radius:3px 3px 0 0;"></div>
<span class="t" style="top:5.76px;font-size:9.5px;line-height:9.5px;color:#fff;white-space:pre;left:236.5px;transform-origin:0 0;transform:translateX(-50%) scaleX(0.9608);transform-origin:50% 0;">Build Assemblies</span>
<div style="left:7px;top:7px;width:8px;height:7px;border:1px solid #c8d0da;border-radius:1px;"></div>
<svg style="left:9px;top:9.5px" width="4" height="2" viewBox="0 0 4 2"><path d="M0 0H4L2 2Z" fill="#fff"/></svg>
<div style="left:459px;top:12.6px;width:7.5px;height:2px;background:#e8ecf2;"></div>
<div style="left:474px;top:7.6px;width:9px;height:7.2px;border:1px solid #e8ecf2;border-top-width:2px;"></div>
<svg style="left:490.5px;top:8px" width="7.5" height="7" viewBox="0 0 7.5 7"><path d="M1 0.8L6.5 6.2M6.5 0.8L1 6.2" stroke="#e8ecf2" stroke-width="1.9"/></svg>
<div style="left:3.6px;top:20px;width:499.4px;height:20.4px;background:linear-gradient(#f6f6f6 0%,#ececec 45%,#dcdcdc 100%);"></div>
<div style="left:3.6px;top:39.4px;width:499.4px;height:1px;background:#cacaca;"></div>
<svg style="left:7.6px;top:25.8px" width="8.6" height="8.6" viewBox="0 0 8.6 8.6"><path d="M0.2 4.3L5 0.2V2.4H8.4V6.2H5V8.4Z" fill="#3d6dd6" stroke="#2850a8" stroke-width="0.5"/></svg>
<span class="t" style="top:26.00px;font-size:9.2px;line-height:9.2px;color:#1e1e1e;white-space:pre;left:21px;transform-origin:0 0;transform:scaleX(0.8671);-webkit-text-stroke:0.25px #1e1e1e;">Previous</span>
<svg style="left:60.4px;top:25.8px" width="8.6" height="8.6" viewBox="0 0 8.6 8.6"><path d="M8.4 4.3L3.6 0.2V2.4H0.2V6.2H3.6V8.4Z" fill="#3d6dd6" stroke="#2850a8" stroke-width="0.5"/></svg>
<span class="t" style="top:26.00px;font-size:9.2px;line-height:9.2px;color:#1e1e1e;white-space:pre;left:73px;transform-origin:0 0;transform:scaleX(0.8992);-webkit-text-stroke:0.25px #1e1e1e;">Next</span>
<span class="t" style="top:26.00px;font-size:9.2px;line-height:9.2px;color:#1e1e1e;white-space:pre;left:112px;transform-origin:0 0;transform:scaleX(0.8868);-webkit-text-stroke:0.25px #1e1e1e;">Print Preview</span>
<svg style="left:169px;top:24px" width="12" height="11" viewBox="0 0 12 11"><rect x="2.5" y="0.5" width="7" height="4" fill="#f1e4a8" stroke="#b89a34"/><rect x="0.5" y="4" width="11" height="5" rx="1.5" fill="#dcb83c"/><rect x="1.5" y="8.4" width="9" height="2.2" rx="0.8" fill="#b8922a"/><rect x="2" y="5.6" width="8" height="1" fill="#f4e8b4"/></svg>
<span class="t" style="top:26.00px;font-size:9.2px;line-height:9.2px;color:#1e1e1e;white-space:pre;left:184px;transform-origin:0 0;transform:scaleX(0.9521);-webkit-text-stroke:0.25px #1e1e1e;">Print</span>
<svg style="left:211px;top:29px" width="5" height="3" viewBox="0 0 5 3"><path d="M0 0H5L2.5 3Z" fill="#222"/></svg>
<svg style="left:223px;top:24px" width="12" height="12" viewBox="0 0 12 12"><circle cx="5.6" cy="5.4" r="5" fill="#6aa86a" stroke="#3f7c3f" stroke-width="0.8"/><path d="M3 5.4L5 7.6L8.4 3" stroke="#e8f4e8" stroke-width="1.5" fill="none"/><path d="M4 11.5L8.6 6.5L10.4 8.2L6 12Z" fill="#9aa89a"/></svg>
<span class="t" style="top:26.00px;font-size:9.2px;line-height:9.2px;color:#1e1e1e;white-space:pre;left:237px;transform-origin:0 0;transform:scaleX(0.8985);-webkit-text-stroke:0.25px #1e1e1e;">Customize</span>
<svg style="left:286px;top:29px" width="5" height="3" viewBox="0 0 5 3"><path d="M0 0H5L2.5 3Z" fill="#222"/></svg>
<div style="left:295px;top:22px;width:1px;height:17px;background:#c8c8c8;"></div>
<svg style="left:301px;top:24px" width="9" height="12" viewBox="0 0 9 12"><path d="M1.6 5V3.4A2.6 2.6 0 0 1 6.8 3.4V8.6A2.2 2.2 0 0 1 2.4 8.6V4.6A1.2 1.2 0 0 1 4.8 4.6V8" stroke="#3c62b8" stroke-width="2" fill="none" stroke-linecap="round"/></svg>
<span class="t" style="top:26.00px;font-size:9.2px;line-height:9.2px;color:#1e1e1e;white-space:pre;left:315px;transform-origin:0 0;transform:scaleX(0.9214);-webkit-text-stroke:0.25px #1e1e1e;">Attach</span>
<div style="left:346px;top:22px;width:1px;height:17px;background:#c8c8c8;"></div>
<div style="left:3.6px;top:40.4px;width:499.4px;height:385.6px;background:#fcfcfc;"></div>
<span class="t" style="top:49.09px;font-size:7px;line-height:7px;color:#7a7a7a;white-space:pre;left:12px;transform-origin:0 0;transform:scaleX(1.0042);">ASSEMBLY ITEM</span>
<div style="left:79px;top:46px;width:130px;height:16px;background:#f3f3f3;border:1px solid #86a8e0;border-radius:2px;box-shadow:0 0 0 1px #dbe6f8;"></div>
<div style="left:81px;top:49px;width:41px;height:11px;background:#4f9a0c;"></div>
<span class="t" style="top:49.90px;font-size:8.5px;line-height:8.5px;color:#fff;white-space:pre;left:82px;transform-origin:0 0;transform:scaleX(0.8876);">Assembly 1</span>
<svg style="left:198px;top:52.5px" width="5" height="3" viewBox="0 0 5 3"><path d="M0 0H5L2.5 3Z" fill="#333"/></svg>
<span class="t" style="top:44.82px;font-size:7.5px;line-height:7.5px;color:#7a7a7a;white-space:pre;left:341px;transform-origin:0 0;transform:scaleX(0.8836);">Date</span>
<div style="left:340px;top:53px;width:75px;height:17px;background:#ededed;border:1px solid #8f8f8f;border-radius:3px;"></div>
<span class="t" style="top:57.40px;font-size:8.5px;line-height:8.5px;color:#111;white-space:pre;left:342.3px;transform-origin:0 0;transform:scaleX(0.8814);">02/01/2020</span>
<svg style="left:403px;top:58px" width="8" height="7.5" viewBox="0 0 7 7"><rect x="0" y="0.8" width="7" height="6.2" fill="#555"/><rect x="1" y="0" width="1" height="1.6" fill="#333"/><rect x="5" y="0" width="1" height="1.6" fill="#333"/><path d="M1 3.3H6M1 5H6M2.7 2.2V6.4M4.4 2.2V6.4" stroke="#999" stroke-width="0.5"/></svg>
<span class="t" style="top:44.82px;font-size:7.5px;line-height:7.5px;color:#7a7a7a;white-space:pre;left:420.5px;transform-origin:0 0;transform:scaleX(0.9615);">Build Ref. No.</span>
<div style="left:420px;top:53px;width:69px;height:17px;background:#ededed;border:1px solid #8f8f8f;border-radius:3px;"></div>
<span class="t" style="top:57.40px;font-size:8.5px;line-height:8.5px;color:#111;white-space:pre;left:423px;transform-origin:0 0;">3</span>
<div style="left:8px;top:74px;width:489px;height:290.4px;background:#fff;border:1px solid #dedede;"></div>
<span class="t" style="top:77.38px;font-size:24.8px;line-height:24.8px;color:#6e6e6e;white-space:pre;left:11.8px;transform-origin:0 0;transform:scaleX(1.0080);">Build Assembly</span>
<svg style="left:12.4px;top:102.2px" width="21.6" height="16" viewBox="0 0 21.6 16"><path d="M0 8L8.4 1.1Q13 -0.7 17.6 1.9A7.9 7.9 0 0 1 17.6 14.1Q13 16.7 8.4 14.9Z" fill="#e8830f"/><circle cx="12.4" cy="8" r="5" fill="#fff"/><circle cx="12.4" cy="8" r="3.8" fill="#e8830f"/><path d="M12.4 5.8V8.3H14.2" stroke="#fff" stroke-width="0.9" fill="none"/></svg>
<span class="t" style="top:101.43px;font-size:9.8px;line-height:9.8px;color:#e8830f;white-space:pre;font-weight:bold;left:38.7px;transform-origin:0 0;transform:scaleX(0.9744);">PENDING</span>
<span class="t" style="top:110.50px;font-size:10px;line-height:10px;color:#e8830f;white-space:pre;left:38.7px;transform-origin:0 0;transform:scaleX(0.9566);">NON-POSTING</span>
<span class="t" style="top:81.83px;font-size:7.5px;line-height:7.5px;color:#8a8a8a;white-space:pre;left:341px;transform-origin:0 0;transform:scaleX(0.8707);">TEMPLATE</span>
<div style="left:380px;top:79px;width:109px;height:15.2px;background:#f1f1f1;border:1px solid #d6d6d6;border-radius:2px;"></div>
<span class="t" style="top:83.26px;font-size:8px;line-height:8px;color:#111;white-space:pre;left:383.4px;transform-origin:0 0;transform:scaleX(0.9163);">Custom Build Assembly</span>
<svg style="left:479px;top:85px" width="5" height="3" viewBox="0 0 5 3"><path d="M0 0H5L2.5 3Z" fill="#333"/></svg>
<span class="t" style="top:109.53px;font-size:7.5px;line-height:7.5px;color:#5e5e5e;white-space:pre;right:675.5px;transform-origin:100% 0;transform:scaleX(0.9402);">QUANTITY ON HAND</span>
<span class="t" style="top:121.53px;font-size:7.5px;line-height:7.5px;color:#5e5e5e;white-space:pre;right:675.5px;transform-origin:100% 0;transform:scaleX(0.9478);">QUANTITY ON SALES ORDER</span>
<span class="t" style="top:134.03px;font-size:7.5px;line-height:7.5px;color:#5e5e5e;white-space:pre;right:675.5px;transform-origin:100% 0;transform:scaleX(0.9238);">QUANTITY RESERVED FOR OTHER ASSEMBLIES</span>
<span class="t" style="top:147.03px;font-size:7.5px;line-height:7.5px;color:#5e5e5e;white-space:pre;right:675.5px;transform-origin:100% 0;transform:scaleX(0.9647);">QUANTITY AVAILABLE</span>
<span class="t" style="top:109.53px;font-size:7.5px;line-height:7.5px;color:#5e5e5e;white-space:pre;left:389px;transform-origin:0 0;transform:scaleX(0.9635);">-1 Build Point:</span>
<span class="t" style="top:121.53px;font-size:7.5px;line-height:7.5px;color:#5e5e5e;white-space:pre;left:392px;transform-origin:0 0;">0</span>
<span class="t" style="top:133.53px;font-size:7.5px;line-height:7.5px;color:#5e5e5e;white-space:pre;left:392px;transform-origin:0 0;">0</span>
<div style="left:326px;top:144px;width:79px;height:3px;background:#fff;border:1px solid #8a8a8a;border-radius:1px;"></div>
<span class="t" style="top:149.53px;font-size:7.5px;line-height:7.5px;color:#5e5e5e;white-space:pre;left:390px;transform-origin:0 0;">-1</span>
<span class="t" style="top:172.56px;font-size:8px;line-height:8px;color:#1a1a1a;white-space:pre;left:14px;transform-origin:0 0;transform:scaleX(0.9208);">Components Needed to Build  Assembly 1</span>
<div style="left:82px;top:185px;width:1px;height:1px;background:#b0b0b0;"></div>
<div style="left:82px;top:187px;width:1px;height:1px;background:#b0b0b0;"></div>
<div style="left:82px;top:189px;width:1px;height:1px;background:#b0b0b0;"></div>
<div style="left:82px;top:191px;width:1px;height:1px;background:#b0b0b0;"></div>
<div style="left:226px;top:185px;width:1px;height:1px;background:#b0b0b0;"></div>
<div style="left:226px;top:187px;width:1px;height:1px;background:#b0b0b0;"></div>
<div style="left:226px;top:189px;width:1px;height:1px;background:#b0b0b0;"></div>
<div style="left:226px;top:191px;width:1px;height:1px;background:#b0b0b0;"></div>
<div style="left:263px;top:185px;width:1px;height:1px;background:#b0b0b0;"></div>
<div style="left:263px;top:187px;width:1px;height:1px;background:#b0b0b0;"></div>
<div style="left:263px;top:189px;width:1px;height:1px;background:#b0b0b0;"></div>
<div style="left:263px;top:191px;width:1px;height:1px;background:#b0b0b0;"></div>
<div style="left:354px;top:185px;width:1px;height:1px;background:#b0b0b0;"></div>
<div style="left:354px;top:187px;width:1px;height:1px;background:#b0b0b0;"></div>
<div style="left:354px;top:189px;width:1px;height:1px;background:#b0b0b0;"></div>
<div style="left:354px;top:191px;width:1px;height:1px;background:#b0b0b0;"></div>
<div style="left:441px;top:185px;width:1px;height:1px;background:#b0b0b0;"></div>
<div style="left:441px;top:187px;width:1px;height:1px;background:#b0b0b0;"></div>
<div style="left:441px;top:189px;width:1px;height:1px;background:#b0b0b0;"></div>
<div style="left:441px;top:191px;width:1px;height:1px;background:#b0b0b0;"></div>
<span class="t" style="top:185.83px;font-size:7.5px;line-height:7.5px;color:#9a9a9a;white-space:pre;left:17px;transform-origin:0 0;transform:scaleX(1.0044);">ITEM</span>
<span class="t" style="top:185.83px;font-size:7.5px;line-height:7.5px;color:#9a9a9a;white-space:pre;left:88px;transform-origin:0 0;transform:scaleX(0.9558);">DESCRIPTION</span>
<span class="t" style="top:185.83px;font-size:7.5px;line-height:7.5px;color:#9a9a9a;white-space:pre;left:232px;transform-origin:0 0;transform:scaleX(1.0207);">TYPE</span>
<span class="t" style="top:185.83px;font-size:7.5px;line-height:7.5px;color:#9a9a9a;white-space:pre;left:269px;transform-origin:0 0;transform:scaleX(0.9826);">PER ITEM QTY</span>
<span class="t" style="top:185.83px;font-size:7.5px;line-height:7.5px;color:#9a9a9a;white-space:pre;left:360px;transform-origin:0 0;transform:scaleX(0.9624);">QTY ON HAND</span>
<span class="t" style="top:185.83px;font-size:7.5px;line-height:7.5px;color:#9a9a9a;white-space:pre;left:447px;transform-origin:0 0;transform:scaleX(0.9732);">QTY NEE...</span>
<div style="left:12px;top:197px;width:468px;height:131px;background:#fff;"></div>
<div style="left:227px;top:197px;width:37px;height:16px;background:#ebebeb;"></div>
<div style="left:355px;top:197px;width:87px;height:16px;background:#ebebeb;"></div>
<div style="left:12px;top:213px;width:468px;height:15px;background:#e2eefe;"></div>
<div style="left:227px;top:213px;width:37px;height:15px;background:#cedbea;"></div>
<div style="left:355px;top:213px;width:87px;height:15px;background:#cedbea;"></div>
<div style="left:227px;top:228px;width:37px;height:16px;background:#ebebeb;"></div>
<div style="left:355px;top:228px;width:87px;height:16px;background:#ebebeb;"></div>
<div style="left:12px;top:244px;width:468px;height:16px;background:#e2eefe;"></div>
<div style="left:227px;top:244px;width:37px;height:16px;background:#cedbea;"></div>
<div style="left:355px;top:244px;width:87px;height:16px;background:#cedbea;"></div>
<div style="left:227px;top:260px;width:37px;height:16px;background:#ebebeb;"></div>
<div style="left:355px;top:260px;width:87px;height:16px;background:#ebebeb;"></div>
<div style="left:12px;top:276px;width:468px;height:16px;background:#e2eefe;"></div>
<div style="left:227px;top:276px;width:37px;height:16px;background:#cedbea;"></div>
<div style="left:355px;top:276px;width:87px;height:16px;background:#cedbea;"></div>
<div style="left:227px;top:292px;width:37px;height:15px;background:#ebebeb;"></div>
<div style="left:355px;top:292px;width:87px;height:15px;background:#ebebeb;"></div>
<div style="left:12px;top:307px;width:468px;height:16px;background:#e2eefe;"></div>
<div style="left:227px;top:307px;width:37px;height:16px;background:#cedbea;"></div>
<div style="left:355px;top:307px;width:87px;height:16px;background:#cedbea;"></div>
<div style="left:227px;top:323px;width:37px;height:5px;background:#ebebeb;"></div>
<div style="left:355px;top:323px;width:87px;height:5px;background:#ebebeb;"></div>
<div style="left:83px;top:197px;width:1px;height:131px;background:#bdbdbd;"></div>
<div style="left:264px;top:197px;width:1px;height:131px;background:#bdbdbd;"></div>
<div style="left:355px;top:197px;width:1px;height:131px;background:#bdbdbd;"></div>
<div style="left:442px;top:197px;width:1px;height:131px;background:#bdbdbd;"></div>
<div style="left:227px;top:197px;width:1px;height:131px;background:#c6c6c6;"></div>
<div style="left:12px;top:196px;width:469px;height:133px;border:1px solid #c2c2c2;"></div>
<div style="left:12px;top:196px;width:469px;height:17px;border:1px solid #7c7c7c;"></div>
<span class="t" style="top:200.16px;font-size:8px;line-height:8px;color:#000;white-space:pre;left:14.2px;transform-origin:0 0;transform:scaleX(0.9153);">Inventory Item 1</span>
<span class="t" style="top:200.16px;font-size:8px;line-height:8px;color:#111;white-space:pre;left:229px;transform-origin:0 0;transform:scaleX(0.9065);">Inv Part</span>
<span class="t" style="top:200.16px;font-size:8px;line-height:8px;color:#111;white-space:pre;left:267px;transform-origin:0 0;">1</span>
<span class="t" style="top:200.16px;font-size:8px;line-height:8px;color:#111;white-space:pre;left:358px;transform-origin:0 0;">0</span>
<span class="t" style="top:200.16px;font-size:8px;line-height:8px;color:#111;white-space:pre;left:445px;transform-origin:0 0;">1</span>
<span class="t" style="top:215.91px;font-size:8px;line-height:8px;color:#000;white-space:pre;left:14.2px;transform-origin:0 0;transform:scaleX(0.9223);">Inventory item 2</span>
<span class="t" style="top:215.91px;font-size:8px;line-height:8px;color:#111;white-space:pre;left:229px;transform-origin:0 0;transform:scaleX(0.9065);">Inv Part</span>
<span class="t" style="top:215.91px;font-size:8px;line-height:8px;color:#111;white-space:pre;left:267px;transform-origin:0 0;">1</span>
<span class="t" style="top:215.91px;font-size:8px;line-height:8px;color:#111;white-space:pre;left:358px;transform-origin:0 0;">0</span>
<span class="t" style="top:215.91px;font-size:8px;line-height:8px;color:#111;white-space:pre;left:445px;transform-origin:0 0;">1</span>
<span class="t" style="top:231.66px;font-size:8px;line-height:8px;color:#000;white-space:pre;left:14.2px;transform-origin:0 0;transform:scaleX(0.9222);">Inventory 3</span>
<span class="t" style="top:231.66px;font-size:8px;line-height:8px;color:#111;white-space:pre;left:229px;transform-origin:0 0;transform:scaleX(0.9065);">Inv Part</span>
<span class="t" style="top:231.66px;font-size:8px;line-height:8px;color:#111;white-space:pre;left:267px;transform-origin:0 0;">1</span>
<span class="t" style="top:231.66px;font-size:8px;line-height:8px;color:#111;white-space:pre;left:358px;transform-origin:0 0;">0</span>
<span class="t" style="top:231.66px;font-size:8px;line-height:8px;color:#111;white-space:pre;left:445px;transform-origin:0 0;">1</span>
<div style="left:481px;top:196px;width:10px;height:133px;background:#f2f2f2;border:1px solid #e0e0e0;border-left:none;"></div>
<svg style="left:482.5px;top:199px" width="7" height="5" viewBox="0 0 7 5"><path d="M0 5H7L3.5 0Z" fill="#9a9a9a"/></svg>
<svg style="left:482.5px;top:320px" width="7" height="5" viewBox="0 0 7 5"><path d="M0 0H7L3.5 5Z" fill="#9a9a9a"/></svg>
<span class="t" style="top:332.76px;font-size:8px;line-height:8px;color:#6a6a6a;white-space:pre;left:147px;transform-origin:0 0;transform:scaleX(0.9246);">Maximum number you can build from the quantity on hand: 0</span>
<span class="t" style="top:344.52px;font-size:7.5px;line-height:7.5px;color:#5e5e5e;white-space:pre;left:274px;transform-origin:0 0;transform:scaleX(0.9299);"><u>Q</u>UANTITY TO BUILD</span>
<div style="left:353px;top:343px;width:57px;height:17px;background:#ededed;border:1px solid #8f8f8f;border-radius:3px;"></div>
<span class="t" style="top:347.50px;font-size:8.5px;line-height:8.5px;color:#111;white-space:pre;right:592.4px;transform-origin:100% 0;">1</span>
<div style="left:9.4px;top:371px;width:8px;height:8px;background:linear-gradient(#f6f6f6,#dedede);border:1px solid #8e8e8e;border-radius:1.5px;"></div>
<svg style="left:10.4px;top:372px" width="6" height="6" viewBox="0 0 6 6"><path d="M0.8 3.1L2.4 4.8L5.4 0.9" stroke="#333" stroke-width="1.3" fill="none"/></svg>
<span class="t" style="top:371.46px;font-size:8px;line-height:8px;color:#222;white-space:pre;left:21px;transform-origin:0 0;transform:scaleX(0.9294);">To be printe<u>d</u></span>
<div style="left:322.4px;top:371px;width:8px;height:8px;background:#e6e6e6;border:1px solid #bdbdbd;border-radius:1.5px;"></div>
<span class="t" style="top:371.86px;font-size:8px;line-height:8px;color:#b4b4b4;white-space:pre;left:334px;transform-origin:0 0;transform:scaleX(0.9321);">Automatically build required subassemblies</span>
<span class="t" style="top:384.52px;font-size:7.5px;line-height:7.5px;color:#6b6b6b;white-space:pre;left:9px;transform-origin:0 0;transform:scaleX(0.8568);"><u>M</u>EMO</span>
<div style="left:37px;top:383px;width:177px;height:17px;background:#ededed;border:1px solid #8f8f8f;border-radius:3px;"></div>
<div style="left:8px;top:403px;width:136px;height:17px;background:linear-gradient(#f2f2f2,#ececec);border:1px solid #e8e8e8;border-radius:2px;"></div>
<span class="t" style="top:406.56px;font-size:9.1px;line-height:9.1px;color:#a6a6a6;white-space:pre;font-weight:bold;left:76.0px;transform-origin:0 0;transform:translateX(-50%) scaleX(1.0182);transform-origin:50% 0;">Remove Pending Status</span>
<div style="left:148px;top:403px;width:94px;height:17px;background:linear-gradient(#fcfcfc,#eeeeee);border:1px solid #dedede;border-radius:2px;box-shadow:0 1px 0 #eeeeee;"></div>
<span class="t" style="top:406.56px;font-size:9.1px;line-height:9.1px;color:#383838;white-space:pre;font-weight:bold;left:195.0px;transform-origin:0 0;transform:translateX(-50%) scaleX(1.0123);transform-origin:50% 0;">Show Shortage</span>
<div style="left:275px;top:403px;width:70px;height:17px;background:linear-gradient(#fcfcfc,#eeeeee);border:1px solid #dedede;border-radius:2px;box-shadow:0 1px 0 #eeeeee;"></div>
<span class="t" style="top:406.56px;font-size:9.1px;line-height:9.1px;color:#383838;white-space:pre;font-weight:bold;left:310.0px;transform-origin:0 0;transform:translateX(-50%) scaleX(0.9979);transform-origin:50% 0;">Build &amp; Close</span>
<div style="left:350px;top:403px;width:81px;height:17px;background:linear-gradient(#5a8ae0 0%,#4574d2 50%,#3560c4 100%);border:1px solid #3a62b8;border-radius:2px;"></div>
<span class="t" style="top:406.56px;font-size:9.1px;line-height:9.1px;color:#fff;white-space:pre;font-weight:bold;left:390.5px;transform-origin:0 0;transform:translateX(-50%) scaleX(1.0177);transform-origin:50% 0;">Build &amp; New</span>
<div style="left:436px;top:403px;width:60px;height:17px;background:linear-gradient(#fcfcfc,#eeeeee);border:1px solid #dedede;border-radius:2px;box-shadow:0 1px 0 #eeeeee;"></div>
<span class="t" style="top:406.56px;font-size:9.1px;line-height:9.1px;color:#383838;white-space:pre;font-weight:bold;left:466.0px;transform-origin:0 0;transform:translateX(-50%) scaleX(1.0243);transform-origin:50% 0;">Revert</span>
<div style="left:587px;top:464px;width:385px;height:98px;background:#fff;"></div>
<span class="t" style="top:470.86px;font-size:16.5px;line-height:16.5px;color:#ff0000;white-space:pre;left:594px;transform-origin:0 0;transform:scaleX(1.0295);-webkit-text-stroke:0.3px #ff0000;">I adjusted the bill date for the items. Let&#x27;s say on</span>
<span class="t" style="top:493.46px;font-size:16.5px;line-height:16.5px;color:#ff0000;white-space:pre;left:594px;transform-origin:0 0;transform:scaleX(1.0138);-webkit-text-stroke:0.3px #ff0000;">March 1, 2020. On the assembly screen, I can&#x27;t</span>
<span class="t" style="top:516.06px;font-size:16.5px;line-height:16.5px;color:#ff0000;white-space:pre;left:594px;transform-origin:0 0;transform:scaleX(1.0227);-webkit-text-stroke:0.3px #ff0000;">remove the pending status. Just like yours, the</span>
<span class="t" style="top:538.65px;font-size:16.5px;line-height:16.5px;color:#ff0000;white-space:pre;left:594px;transform-origin:0 0;transform:scaleX(1.0231);-webkit-text-stroke:0.3px #ff0000;">QOH on my item list is incorrect.</span>
</body></html>
